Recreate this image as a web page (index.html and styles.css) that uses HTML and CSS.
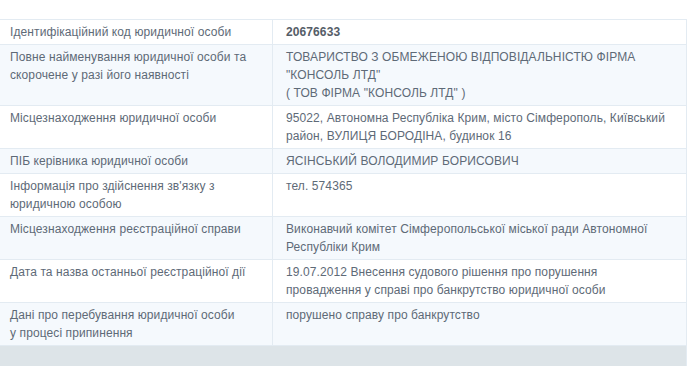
FILE: index.html
```html
<!DOCTYPE html>
<html lang="uk">
<head>
<meta charset="utf-8">
<title>Відомості про юридичну особу</title>
<link rel="stylesheet" href="styles.css">
</head>
<body>
<div class="info">
  <div class="row">
    <div class="label">Ідентифікаційний код юридичної особи</div>
    <div class="value"><b>20676633</b></div>
  </div>
  <div class="row alt">
    <div class="label">Повне найменування юридичної особи та скорочене у разі його наявності</div>
    <div class="value">ТОВАРИСТВО З ОБМЕЖЕНОЮ ВІДПОВІДАЛЬНІСТЮ ФІРМА "КОНСОЛЬ ЛТД"<br>( ТОВ ФІРМА "КОНСОЛЬ ЛТД" )</div>
  </div>
  <div class="row">
    <div class="label">Місцезнаходження юридичної особи</div>
    <div class="value">95022, Автономна Республіка Крим, місто Сімферополь, Київський район, ВУЛИЦЯ БОРОДІНА, будинок 16</div>
  </div>
  <div class="row alt">
    <div class="label">ПІБ керівника юридичної особи</div>
    <div class="value">ЯСІНСЬКИЙ ВОЛОДИМИР БОРИСОВИЧ</div>
  </div>
  <div class="row">
    <div class="label">Інформація про здійснення зв'язку з юридичною особою</div>
    <div class="value">тел. 574365</div>
  </div>
  <div class="row alt">
    <div class="label">Місцезнаходження реєстраційної справи</div>
    <div class="value">Виконавчий комітет Сімферопольської міської ради Автономної Республіки Крим</div>
  </div>
  <div class="row">
    <div class="label">Дата та назва останньої реєстраційної дії</div>
    <div class="value">19.07.2012 Внесення судового рішення про порушення провадження у справі про банкрутство юридичної особи</div>
  </div>
  <div class="row alt">
    <div class="label">Дані про перебування юридичної особи<br>у процесі припинення</div>
    <div class="value">порушено справу про банкрутство</div>
  </div>
  <div class="foot"></div>
</div>
</body>
</html>
```
FILE: styles.css
```css
html, body {
  margin: 0;
  padding: 0;
  background: #ffffff;
}
body {
  padding-top: 19px;
  font-family: "Liberation Sans", Arial, sans-serif;
  font-size: 12px;
  line-height: 18px;
  letter-spacing: 0.1px;
  color: #5e6a77;
}
.info {
  width: 687px;
  box-sizing: border-box;
  border-top: 1px solid #e3ebf2;
  border-right: 1px solid #e3ebf2;
}
.row {
  display: grid;
  grid-template-columns: 273px 1fr;
  border-bottom: 1px solid #e3ebf2;
  background: #ffffff;
}
.row.alt {
  background: #f5f9fd;
}
.label {
  box-sizing: border-box;
  padding: 3px 8px 3px 10px;
  border-right: 1px solid #e3ebf2;
}
.value {
  padding: 3px 18px 3px 13px;
}
.value b {
  font-weight: bold;
  color: #555d67;
}
.foot {
  height: 20px;
  background: #dde4e8;
}
```
